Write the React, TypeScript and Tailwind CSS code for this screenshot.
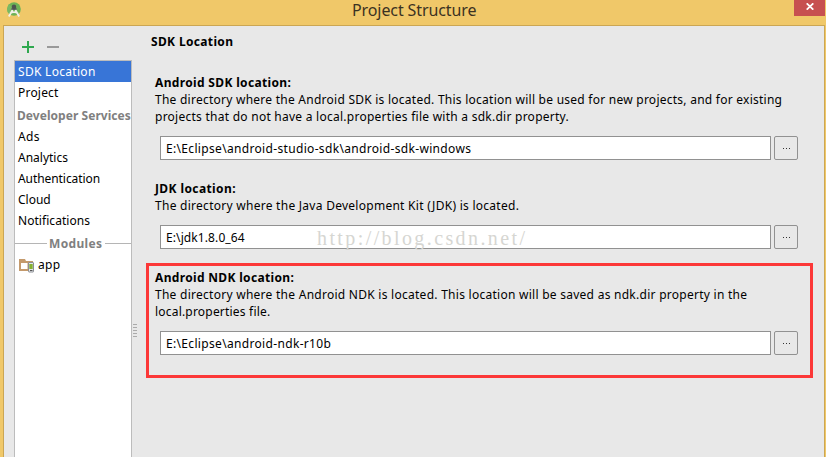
import type { ReactNode } from "react";

function StudioIcon() {
  return (
    <svg width="16" height="17" viewBox="0 0 16 17" className="shrink-0">
      <circle cx="7" cy="7" r="6.8" fill="#6cb255" />
      <path d="M2 11.8a6.8 6.8 0 0 1 0-9.600L7 7z" fill="#79b963" />
      <path d="M6 3h2l2.200 5H3.800z" fill="#56635a" />
      <circle cx="7" cy="4.800" r="2.200" fill="#4c554f" />
      <path d="M5.600 8 1.800 14.500M8.400 8l3.800 6.500M3 11.200Q7 9 11 11.200" fill="none" stroke="#f1f1e8" strokeWidth="1.800" />
    </svg>
  );
}

function ModuleIcon() {
  return (
    <svg width="16" height="15" viewBox="0 0 16 15" className="shrink-0">
      <path d="M0 1h6l1 2h7v2H9v8H0z" fill="#c49a6c" />
      <path d="M2 5h6.500v6H2z" fill="#fff" />
      <rect x="9.500" y="4.500" width="5" height="9.500" rx=".5" fill="#e4e6ea" stroke="#8b8e94" />
      <rect x="10.300" y="6" width="3.400" height="5" fill="#86b030" />
      <path d="M11 12.500h2.500" stroke="#555" />
    </svg>
  );
}

function SideItem({ label, selected = false, className = "" }: { label: string; selected?: boolean; className?: string }) {
  return (
    <div className={`h-[21px] shrink-0 pl-[3px] leading-[21px] ${selected ? "bg-[#3875d7] text-white" : ""}`}>
      <span className={className}>{label}</span>
    </div>
  );
}

function PathRow({ value, children, className = "" }: { value: string; children?: ReactNode; className?: string }) {
  return (
    <div className="ml-[5px] flex h-6 gap-[3px]">
      <div className="flex w-[611px] items-center border border-[#919191] bg-white pl-[5px]">
        <span className={className}>{value}</span>
        {children}
      </div>
      <button className="flex w-6 items-center justify-center gap-[2px] rounded-[2px] border border-[#919191] bg-[#e8e8e8]">
        <i className="size-px bg-[#333]" />
        <i className="size-px bg-[#333]" />
        <i className="size-px bg-[#333]" />
      </button>
    </div>
  );
}

export default function App() {
  return (
    <div className="flex h-[457px] w-[826px] flex-col overflow-hidden bg-[#f0c869] font-['Noto_Sans',sans-serif] text-[12px] whitespace-nowrap text-black">
      <header className="flex h-[25px] shrink-0">
        <div className="w-[352px] pt-[2px] pl-[7px]">
          <StudioIcon />
        </div>
        <h1 className="w-[442px] text-[16px] leading-[21px] text-[#3b3222]">
          <span className="tracking-[-0.1px]">Project Structure</span>
        </h1>
        <button className="flex h-4 w-[31px] justify-center bg-[#c75050] pt-[3px]">
          <svg width="8" height="7" viewBox="0 0 8 7">
            <path d="m.7.3 6.6 6.4M7.3.3.7 6.7" stroke="white" strokeWidth="1.7" />
          </svg>
        </button>
      </header>
      <div className="mr-px ml-[3px] flex min-h-0 grow border-x border-t border-[#cba653] bg-[#e8e8e8]">
        <aside className="ml-[10px] flex w-[118px] shrink-0 flex-col">
          <div className="flex h-[34px] shrink-0 items-start gap-[13px] pt-[15px] pl-2">
            <svg width="12" height="12" viewBox="0 0 12 12">
              <path d="M6 0v12M0 6h12" stroke="#2fa84f" strokeWidth="2" />
            </svg>
            <svg width="12" height="12" viewBox="0 0 12 12">
              <path d="M0 6h12" stroke="#999" strokeWidth="2" />
            </svg>
          </div>
          <nav className="flex grow flex-col overflow-hidden border-x border-t border-[#bcbcbc] bg-white">
            <SideItem label="SDK Location" selected className="tracking-[0.3px]" />
            <SideItem label="Project" className="tracking-[0.2px]" />
            <div className="h-[23px] shrink-0 pl-[2px] leading-[25px] font-bold tracking-[0.05px] text-[#808080]">Developer Services</div>
            <SideItem label="Ads" className="tracking-[0.3px]" />
            <SideItem label="Analytics" />
            <SideItem label="Authentication" className="tracking-[-0.07px]" />
            <SideItem label="Cloud" />
            <SideItem label="Notifications" className="tracking-[0.05px]" />
            <div className="flex h-6 shrink-0 items-center text-[#808080]">
              <div className="h-px w-8 bg-[#b5b5b5]" />
              <span className="w-[58px] pt-px pl-[2px] font-bold tracking-[0.35px]">Modules</span>
              <div className="h-px grow bg-[#b5b5b5]" />
            </div>
            <div className="flex h-5 shrink-0 items-center gap-[3px] pl-1">
              <ModuleIcon />
              <span className="tracking-[0.3px]">app</span>
            </div>
          </nav>
        </aside>
        <div className="flex w-[14px] shrink-0 flex-col pt-[297px] pl-px">
          <div className="h-[15px] w-[4px] bg-[radial-gradient(circle,#aaa_0.8px,transparent_1px)] bg-[length:2px_3px]" />
        </div>
        <main className="w-[667px] shrink-0">
          <h2 className="h-[48px] pt-[7px] pl-[5px] leading-[17px] font-bold tracking-[0.35px]">SDK Location</h2>
          <section className="h-[106px] pl-[9px] leading-[17px]">
            <h3 className="font-bold tracking-[0.34px]">Android SDK location:</h3>
            <p className="tracking-[0.25px]">The directory where the Android SDK is located. This location will be used for new projects, and for existing</p>
            <p className="mb-[11px] tracking-[0.255px]">projects that do not have a local.properties file with a sdk.dir property.</p>
            <PathRow value="E:\Eclipse\android-studio-sdk\android-sdk-windows" className="tracking-[0.33px]" />
          </section>
          <section className="h-[83px] pl-[9px] leading-[17px]">
            <h3 className="font-bold tracking-[0.4px]">JDK location:</h3>
            <p className="mb-[11px] tracking-[0.27px]">The directory where the Java Development Kit (JDK) is located.</p>
            <PathRow value="E:\jdk1.8.0_64" className="w-[151px] tracking-[0.1px]">
              <span className="pt-[2px] font-['Liberation_Serif',serif] text-[20px] tracking-[2.4px] text-[#d6d6d2]">http://blog.csdn.net/</span>
            </PathRow>
          </section>
          <section className="h-[115px] w-[667px] border-3 border-[#fc3838] pt-[3px] pl-[6px] leading-[17px]">
            <h3 className="font-bold tracking-[0.33px]">Android NDK location:</h3>
            <p className="tracking-[0.265px]">The directory where the Android NDK is located. This location will be saved as ndk.dir property in the</p>
            <p className="mb-[11px] tracking-[0.2px]">local.properties file.</p>
            <PathRow value="E:\Eclipse\android-ndk-r10b" className="tracking-[0.33px]" />
          </section>
        </main>
      </div>
    </div>
  );
}
